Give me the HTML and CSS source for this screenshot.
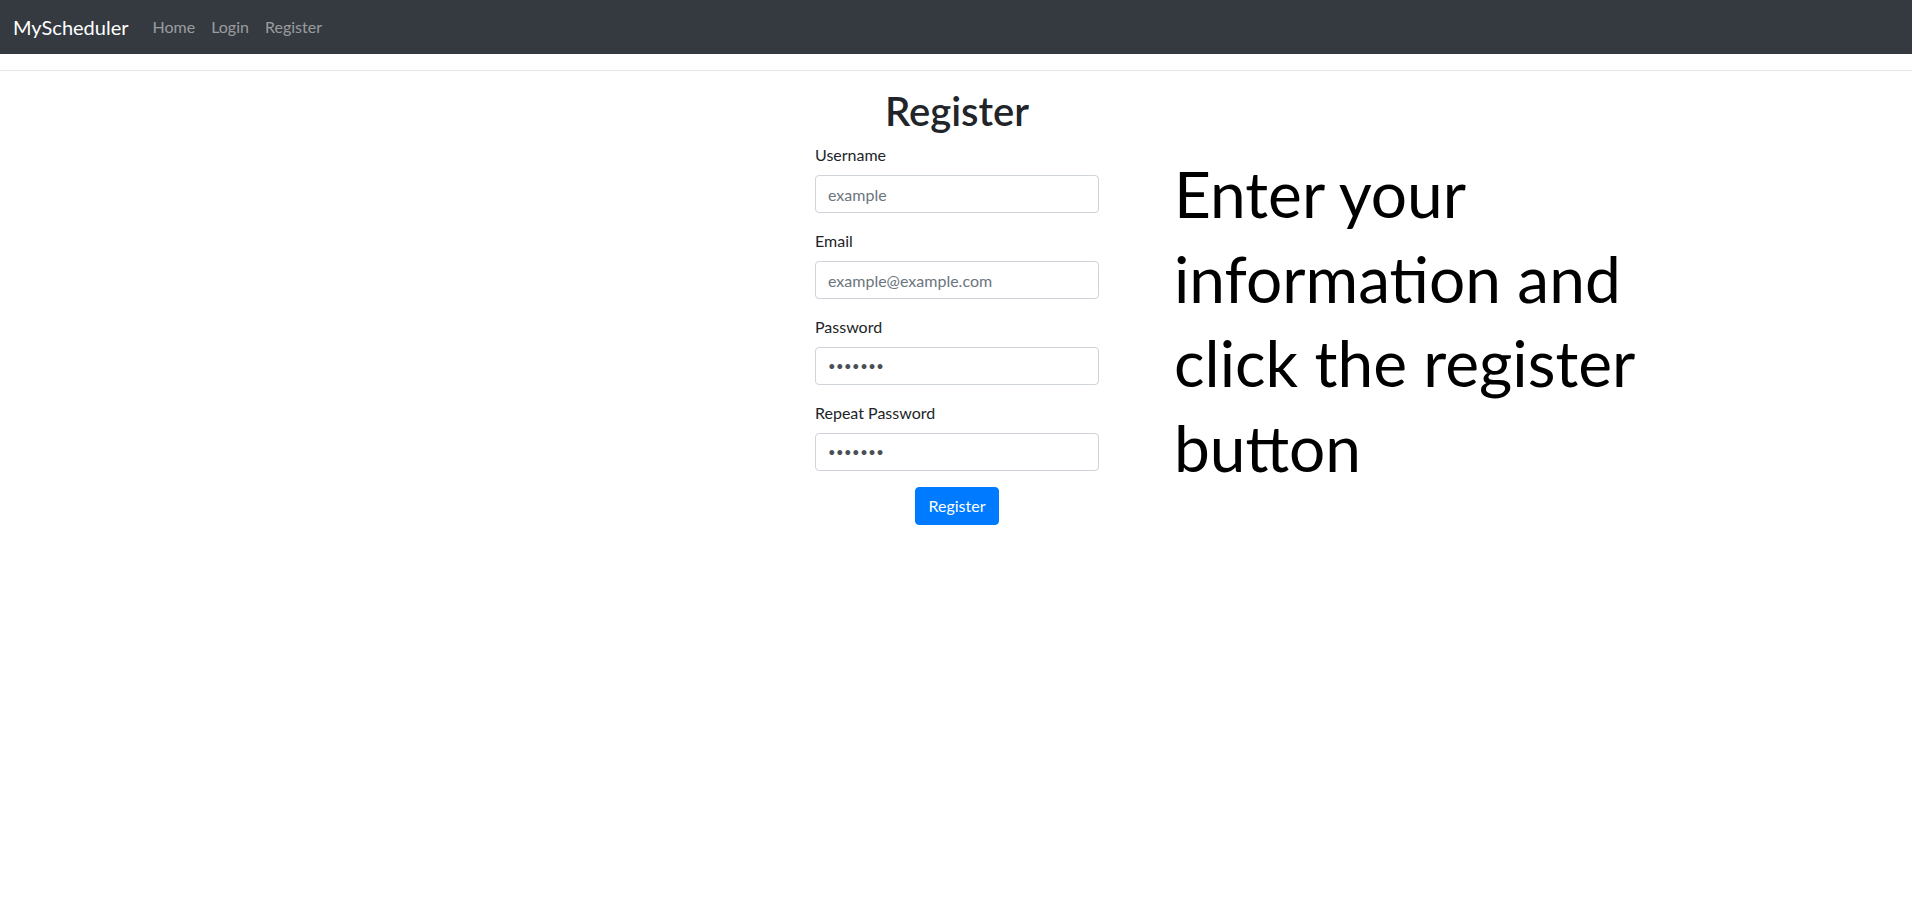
FILE: index.html
```html
<!DOCTYPE html>
<html lang="en">
<head>
<meta charset="utf-8">
<title>MyScheduler - Register</title>
<link rel="stylesheet" href="styles.css">
</head>
<body>
<nav class="navbar">
  <a class="brand" href="#">MyScheduler</a>
  <ul class="nav-links">
    <li><a class="nav-link" href="#">Home</a></li>
    <li><a class="nav-link" href="#">Login</a></li>
    <li><a class="nav-link" href="#">Register</a></li>
  </ul>
</nav>
<hr class="divider">
<main class="layout">
  <div class="spacer"></div>
  <form class="register-form">
    <h1 class="title">Register</h1>
    <div class="form-group">
      <label class="label" for="username">Username</label>
      <input class="input" id="username" type="text" placeholder="example">
    </div>
    <div class="form-group">
      <label class="label" for="email">Email</label>
      <input class="input" id="email" type="email" placeholder="example@example.com">
    </div>
    <div class="form-group">
      <label class="label" for="password">Password</label>
      <input class="input" id="password" type="password" value="1234567">
    </div>
    <div class="form-group">
      <label class="label" for="repeat">Repeat Password</label>
      <input class="input" id="repeat" type="password" value="1234567">
    </div>
    <div class="actions">
      <button class="btn" type="button">Register</button>
    </div>
  </form>
  <div class="info">
    <p class="info-text">Enter your information and click the register button</p>
  </div>
</main>
</body>
</html>
```
FILE: styles.css
```css
* { box-sizing: border-box; }

body {
  margin: 0;
  font-family: "Lato", "Noto Sans", sans-serif;
  font-size: 16px;
  line-height: 1.5;
  color: #212529;
  background: #fff;
}

.navbar {
  height: 54px;
  background: #343a40;
  display: flex;
  align-items: center;
  padding: 0 13px;
}

.brand {
  font-size: 20px;
  line-height: 30px;
  color: #fff;
  text-decoration: none;
  margin-right: 16px;
}

.nav-links {
  display: flex;
  list-style: none;
  margin: 0;
  padding: 0;
}

.nav-link {
  display: block;
  padding: 0 8px;
  color: rgba(255, 255, 255, 0.5);
  text-decoration: none;
  line-height: 24px;
}

.divider {
  margin: 16px 0;
  border: 0;
  border-top: 1px solid rgba(0, 0, 0, 0.1);
  height: 0;
}

.layout {
  display: grid;
  grid-template-columns: 1fr 284px 1fr;
  align-items: start;
  padding-left: 2px;
}

.register-form {
  display: flex;
  flex-direction: column;
}

.title {
  margin: 0 0 8px;
  font-size: 40px;
  font-weight: 600;
  line-height: 48px;
  text-align: center;
  color: #212529;
}

.form-group {
  display: flex;
  flex-direction: column;
  margin-bottom: 16px;
}

.label {
  display: block;
  margin-bottom: 8px;
  line-height: 24px;
}

.input {
  display: block;
  width: 100%;
  height: 38px;
  padding: 6px 12px;
  font-family: inherit;
  font-size: 16px;
  line-height: 24px;
  color: #495057;
  background: #fff;
  border: 1px solid #ced4da;
  border-radius: 4px;
  outline: none;
}

.input[type="password"] {
  font-size: 13px;
  letter-spacing: 0.5px;
}

.input::placeholder {
  color: #6c757d;
  opacity: 1;
}

.actions {
  display: flex;
  justify-content: center;
}

.btn {
  font-family: inherit;
  font-size: 16px;
  line-height: 24px;
  padding: 6px 12px;
  color: #fff;
  background: #007bff;
  border: 1px solid #007bff;
  border-radius: 4px;
  cursor: pointer;
}

.info {
  padding-left: 75px;
  margin-top: 65px;
}

.info-text {
  margin: 0;
  max-width: 520px;
  font-size: 64px;
  line-height: 84.5px;
  color: #000;
}
```
